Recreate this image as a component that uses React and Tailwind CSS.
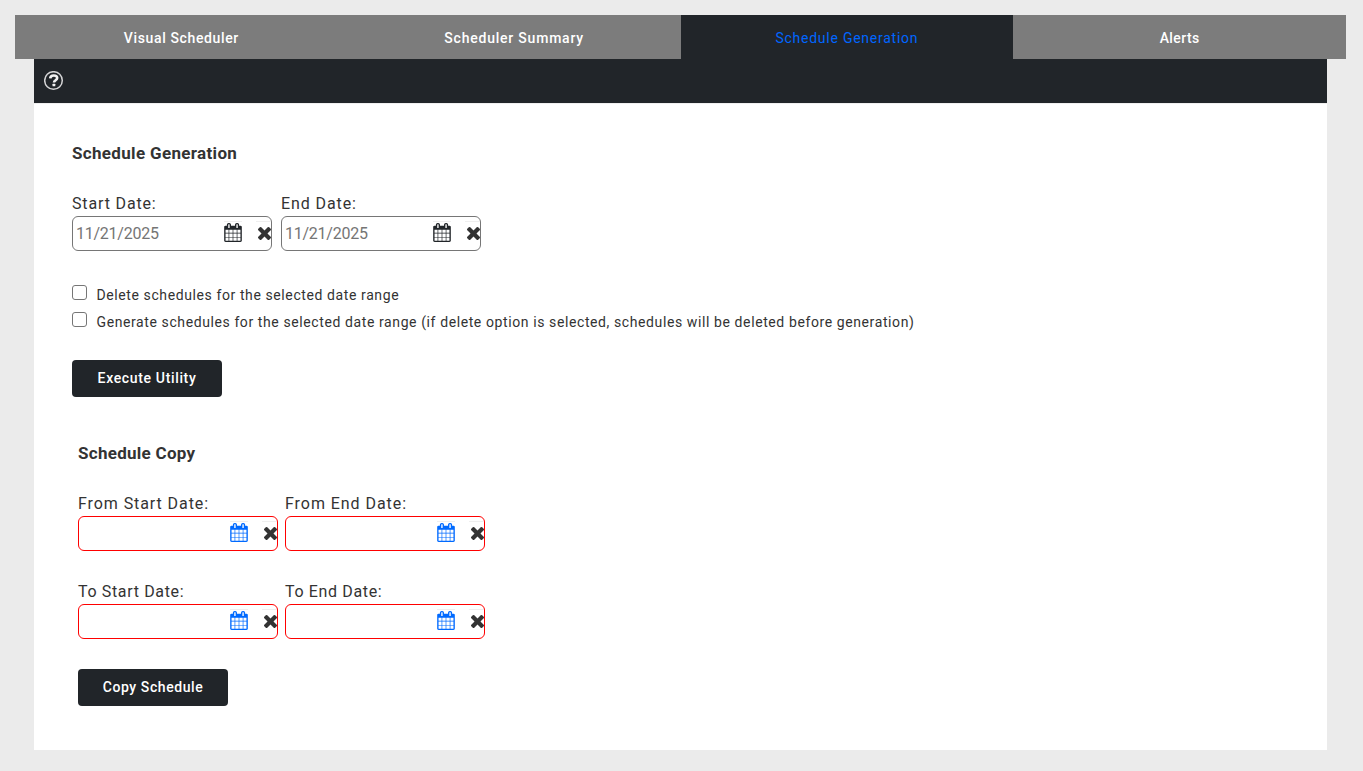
import React, { useState } from 'react';
import clsx from 'clsx';

const TABS = [
    { name: "Visual Scheduler", spacing: "tracking-[0.63px]" },
    { name: "Scheduler Summary", spacing: "tracking-[0.78px]" },
    { name: "Schedule Generation", spacing: "tracking-[0.75px]" },
    { name: "Alerts", spacing: "tracking-[0.4px]" },
];

const CalendarIcon = ({ className }) => (
    <svg viewBox="64 0 1664 1792" fill="currentColor" className={className}>
        <path d="M192 1664h288v-288h-288v288zm352 0h320v-288h-320v288zm-352-352h288v-320h-288v320zm352 0h320v-320h-320v320zm-352-384h288v-288h-288v288zm736 736h320v-288h-320v288zm-384-736h320v-288h-320v288zm768 736h288v-288h-288v288zm-384-352h320v-320h-320v320zm-352-864v-288q0-13-9.5-22.5t-22.5-9.5h-64q-13 0-22.5 9.5t-9.5 22.5v288q0 13 9.5 22.5t22.5 9.5h64q13 0 22.5-9.5t9.5-22.5zm736 864h288v-320h-288v320zm-384-384h320v-288h-320v288zm384 0h288v-288h-288v288zm32-480v-288q0-13-9.5-22.5t-22.5-9.5h-64q-13 0-22.5 9.5t-9.5 22.5v288q0 13 9.5 22.5t22.5 9.5h64q13 0 22.5-9.5t9.5-22.5zm384-64v1280q0 52-38 90t-90 38h-1408q-52 0-90-38t-38-90v-1280q0-52 38-90t90-38h128v-96q0-66 47-113t113-47h64q66 0 113 47t47 113v96h384v-96q0-66 47-113t113-47h64q66 0 113 47t47 113v96h128q52 0 90 38t38 90z" />
    </svg>
);

const TimesIcon = ({ className }) => (
    <svg viewBox="302 366 1188 1188" fill="currentColor" className={className}>
        <path d="M1490 1322q0 40-28 68l-136 136q-28 28-68 28t-68-28l-294-294-294 294q-28 28-68 28t-68-28l-136-136q-28-28-28-68t28-68l294-294-294-294q-28-28-28-68t28-68l136-136q28-28 68-28t68 28l294 294 294-294q28-28 68-28t68 28l136 136q28 28 28 68t-28 68l-294 294 294 294q28 28 28 68z" />
    </svg>
);

const HelpIcon = () => (
    <svg viewBox="0 0 20 20" className="w-5 h-5" fill="none">
        <circle cx="9.5" cy="9.5" r="8.8" stroke="#d4d4d5" strokeWidth="1.5" />
        <path d="M6.2 7.4C6.4 5.3 7.700 4.500 9.700 4.500c2.100 0 3.500 1 3.500 2.600 0 2.200-3.200 2.200-3.200 4.500" stroke="#f1f1f1" strokeWidth="2.600" />
        <rect x="8.500" y="12.700" width="2.800" height="2.600" rx="0.5" fill="#f1f1f1" />
    </svg>
);

const DateField = ({ label, spacing, value = "", required }) => (
    <div className="w-[200px]">
        <label className={clsx("block h-6 leading-6 text-base whitespace-nowrap", spacing)}>{label}</label>
        <div className={clsx("flex h-[35px] rounded-[6px] border bg-white overflow-hidden", required ? "border-[#ff0000]" : "border-[#767676]")}>
            <input
                type="text"
                defaultValue={value}
                className="w-[148px] h-[33px] pl-[3px] text-base tracking-[-0.25px] text-[#757575] bg-transparent focus:outline-none"
            />
            <button className={clsx("w-[18px] h-6 mt-1 pb-[3px] ml-[3px] border-t border-[#efefef] shrink-0", required ? "text-[#006aff]" : "text-[#212529]")}>
                <CalendarIcon className="w-[18px] h-[19px]" />
            </button>
            <button className="w-[15px] h-6 mt-1 ml-[14px] pl-[1.5px] pb-px border-t border-[#efefef] text-[#333] shrink-0">
                <TimesIcon className="w-[13px] h-[13px]" />
            </button>
        </div>
    </div>
);

const CheckRow = ({ label, spacing }) => (
    <label className="flex h-[27px]">
        <input type="checkbox" className="w-[15px] h-[15px] mt-[3px] appearance-none rounded-[3px] border border-[#767676] bg-white shrink-0" />
        <span className={clsx("ml-[9.5px] pt-px text-sm leading-6 whitespace-nowrap", spacing)}>{label}</span>
    </label>
);

const ActionButton = ({ spacing, children }) => (
    <button className={clsx("w-[150px] h-[37px] pb-px rounded bg-[#212529] text-white text-sm font-medium", spacing)}>{children}</button>
);

const App = () => {
    const [active, setActive] = useState("Schedule Generation");

    return (
        <div className="h-[771px] bg-[#ebebeb] pt-[15px] pl-[15px] pr-[17px] font-['Roboto',sans-serif] text-[#333]">
            <div className="grid grid-cols-4 h-11">
                {TABS.map((t) => (
                    <button
                        key={t.name}
                        onClick={() => setActive(t.name)}
                        className={clsx(
                            "text-sm pt-[2px]",
                            t.spacing,
                            t.name === active ? "bg-[#212529] text-[#0066ff] font-normal" : "bg-[#7c7c7c] text-white font-medium"
                        )}
                    >
                        {t.name}
                    </button>
                ))}
            </div>

            <div className="mx-[19px] h-[691px] bg-white">
                <div className="h-11 bg-[#212529] pl-[10px] pt-3">
                    <HelpIcon />
                </div>

                <div className="border-t border-[#efefef] pt-[37px] pl-[38px]">
                    <h2 className="h-6 leading-6 text-[17px] font-bold tracking-[0.33px]">Schedule Generation</h2>
                    <div className="flex gap-[9px] mt-[27px]">
                        <DateField label="Start Date:" spacing="tracking-[0.85px]" value="11/21/2025" />
                        <DateField label="End Date:" spacing="tracking-[0.9px]" value="11/21/2025" />
                    </div>
                    <div className="mt-[31px]">
                        <CheckRow label="Delete schedules for the selected date range" spacing="tracking-[0.6px]" />
                        <CheckRow label="Generate schedules for the selected date range (if delete option is selected, schedules will be deleted before generation)" spacing="tracking-[0.6px]" />
                    </div>
                    <div className="mt-6">
                        <ActionButton spacing="tracking-[0.65px]">Execute Utility</ActionButton>
                    </div>
                </div>

                <div className="pt-[44px] pl-[44px]">
                    <h2 className="h-6 leading-6 text-[17px] font-bold tracking-[0.28px]">Schedule Copy</h2>
                    <div className="flex gap-[7px] mt-[27px]">
                        <DateField label="From Start Date:" spacing="tracking-[0.92px]" required />
                        <DateField label="From End Date:" spacing="tracking-[0.95px]" required />
                    </div>
                    <div className="flex gap-[7px] mt-[29px]">
                        <DateField label="To Start Date:" spacing="tracking-[0.65px]" required />
                        <DateField label="To End Date:" spacing="tracking-[0.65px]" required />
                    </div>
                    <div className="mt-[30px]">
                        <ActionButton spacing="tracking-[0.58px]">Copy Schedule</ActionButton>
                    </div>
                </div>
            </div>
        </div>
    );
};

export default App;
